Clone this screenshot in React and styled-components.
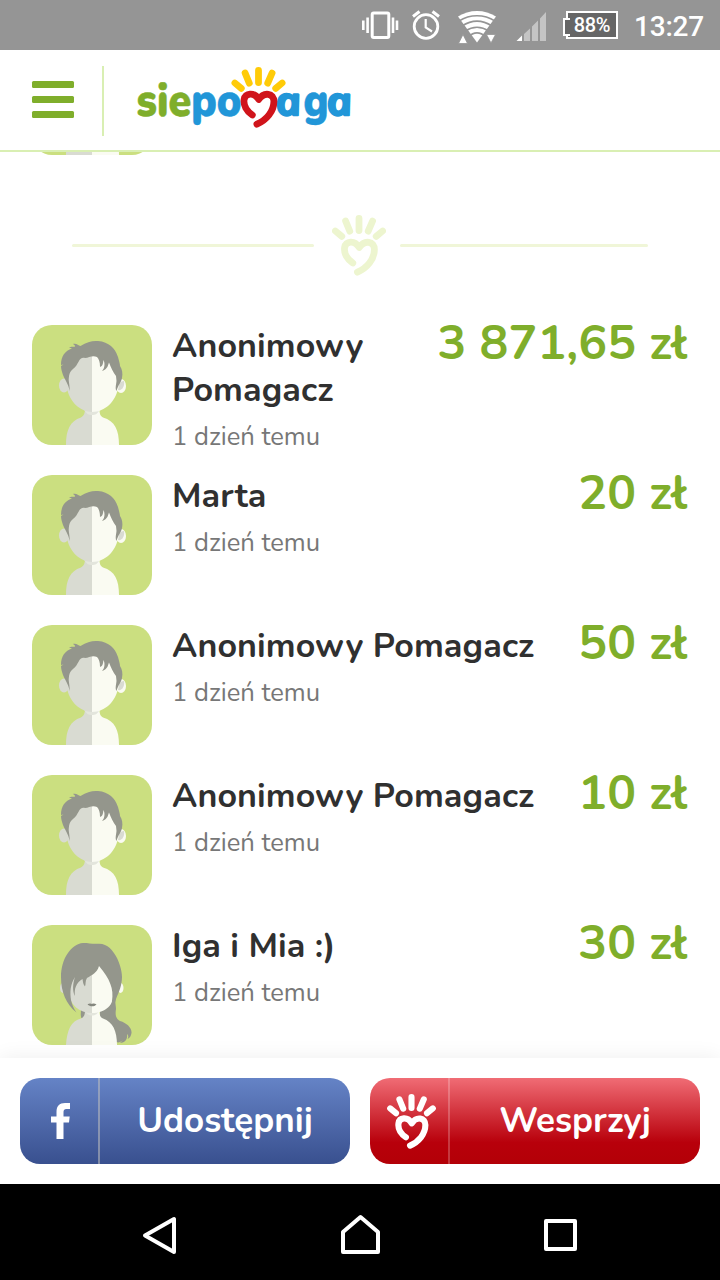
import React from 'react';
import styled, { createGlobalStyle } from 'styled-components';

const GlobalStyle = createGlobalStyle`
    * { box-sizing: border-box; }
    body { margin: 0; background: #fff; }
    svg { display: block; flex: none; }
`

const Screen = styled.div`
    display: flex;
    flex-direction: column;
    width: 720px;
    height: 1280px;
    overflow: hidden;
    background: #fff;
    font-family: Nunito, Lato, sans-serif;
`

const StatusBar = styled.div`
    display: flex;
    justify-content: flex-end;
    align-items: center;
    flex: none;
    height: 50px;
    padding-right: 16px;
    background: #959595;
`

const Clock = styled.span`
    width: 70px;
    margin-left: 16px;
    color: #fff;
    font: 500 28px/32px Roboto, sans-serif;
    letter-spacing: -0.2px;
    white-space: nowrap;
    padding-top: 3px;
`

const Battery = styled.div`
    position: relative;
    display: flex;
    align-items: center;
    justify-content: center;
    width: 52px;
    height: 28px;
    margin-left: 20px;
    border: 2px solid #fff;
    background: #666;
    color: #fff;
    font: 500 20px/24px Roboto, sans-serif;
    letter-spacing: -0.4px;

    &::before {
        content: '';
        position: absolute;
        left: -5px;
        top: 5px;
        width: 5px;
        height: 14px;
        border: 2px solid #fff;
        border-right: 0;
        background: #666;
    }
`

const Header = styled.header`
    display: flex;
    align-items: center;
    flex: none;
    height: 102px;
    padding-left: 32px;
    border-bottom: 2px solid #d9efb3;
    background: #fff;
`

const MenuButton = styled.div`
    display: flex;
    flex-direction: column;
    gap: 8px;
    width: 42px;
    margin-bottom: 1px;
`

const MenuBar = styled.span`
    height: 7px;
    border-radius: 1.5px;
    background: #7fae2b;
`

const HeaderLine = styled.div`
    width: 2px;
    height: 70px;
    margin: 2px 32px 0 28px;
    background: #d9efb3;
`

const Content = styled.main`
    flex: 1;
    min-height: 0;
    overflow: hidden;
    padding: 0 32px;
`

const Previous = styled.div`
    margin-top: -117px;
`

const Divider = styled.div`
    display: flex;
    align-items: center;
    height: 61px;
    margin: 60px 40px 49px;
`

const DividerLine = styled.span`
    flex: ${props => props.$grow} 0 0;
    height: 3px;
    border-radius: 2px;
    background: #f0f6d8;
`

const DividerIcon = styled.div`
    margin: 0 14px 0 18px;
`

const List = styled.div`
    display: flex;
    flex-direction: column;
    gap: 30px;
`

const Row = styled.div`
    display: flex;
    height: 120px;
`

const Avatar = styled.div`
    flex: none;
    width: 120px;
    height: 120px;
    overflow: hidden;
    border-radius: 20px;
    background: #cbdf80;
`

const Person = styled.div`
    flex: 1;
    min-width: 0;
    margin-top: -1px;
    padding-left: 20px;
`

const Name = styled.div`
    color: #303030;
    font-size: 34px;
    font-weight: 700;
    line-height: 44px;
    letter-spacing: 0.1px;
`

const Ago = styled.div`
    margin-top: 9px;
    color: #777;
    font-size: 25.6px;
    line-height: 32px;
`

const Amount = styled.div`
    margin: -1px 0.5px 0 0;
    color: #7fae2b;
    font-size: 48px;
    font-weight: 700;
    line-height: 38px;
    letter-spacing: 0.1px;
    white-space: nowrap;
`

const Footer = styled.footer`
    display: flex;
    flex: none;
    gap: 20px;
    height: 126px;
    padding: 20px;
    position: relative;
    background: #fff;
    box-shadow: 0 0 20px rgba(0, 0, 0, 0.07);
`

const Button = styled.div`
    display: flex;
    flex: 1;
    height: 86px;
    overflow: hidden;
    border-radius: 20px;
    background: ${props => props.$red
        ? 'linear-gradient(#f06c75, #b8000b 75%, #b30007)'
        : 'linear-gradient(#6583c6, #39508f)'};
    color: #fff;
`

const ButtonIcon = styled.div`
    display: flex;
    align-items: center;
    justify-content: center;
    width: 80px;
    padding-left: ${props => props.$red ? '5px' : '3px'};
    border-right: 2px solid ${props => props.$red ? 'rgba(255, 255, 255, .22)' : 'rgba(190, 190, 190, .55)'};
`

const ButtonLabel = styled.div`
    flex: 1;
    text-align: center;
    font-size: 35px;
    font-weight: 700;
    line-height: 85px;
`

const NavBar = styled.nav`
    display: flex;
    justify-content: space-between;
    align-items: center;
    flex: none;
    height: 96px;
    padding: 6px 140px 0;
    background: #000;
`

const HandShape = ({ rays, heart }) => (
    <g fill="none" strokeLinecap="round" strokeLinejoin="round">
        <path stroke={rays} strokeWidth="6.8" d="M27 3.5V15.5M13.6 6L17.8 16.2M40.6 6L36.2 16.2M3.4 16L9.8 21.3M50.6 16L44.2 21.3" />
        <path stroke={heart} strokeWidth="6.8" d="M20.8 48C15 44 11.8 38 12.6 32.5C13.5 26 22.5 24.5 27.3 32.5C32.5 24.5 42.4 26 42.4 34.5C42.3 44.5 35 53 25.4 57.2" />
    </g>
)

const Hand = ({ color, width = 54, height = 61 }) => (
    <svg width={width} height={height} viewBox="0 0 54 61">
        <HandShape rays={color} heart={color} />
    </svg>
)

const LogoText = styled.text`
    font-family: Nunito, Lato, sans-serif;
    font-size: 46px;
    font-weight: 900;
    fill: ${props => props.$color};
    stroke: ${props => props.$color};
    stroke-width: 0.4px;
`

// the slanted cut has the single-storey a, so it is leaned back upright
const LogoA = styled(LogoText)`
    font-family: 'Open Sans', sans-serif;
    font-size: 38px;
    font-style: italic;
    font-weight: 600;
    stroke-width: 2.6px;
    stroke-linejoin: round;
`

const Logo = () => (
    <svg width="218" height="66" viewBox="136 67 218 66">
        <LogoText $color="#2196d8" x="136.5" y="116" textLength="105" lengthAdjust="spacingAndGlyphs">
            <tspan fill="#7fae2b" stroke="#7fae2b">sie</tspan>po
        </LogoText>
        <LogoA $color="#2196d8" transform="translate(278 114.8) skewX(12)" textLength="25" lengthAdjust="spacingAndGlyphs">a</LogoA>
        <LogoText $color="#2196d8" x="303.5" y="116" textLength="25" lengthAdjust="spacingAndGlyphs">g</LogoText>
        <LogoA $color="#2196d8" transform="translate(329 114.8) skewX(12)" textLength="25" lengthAdjust="spacingAndGlyphs">a</LogoA>
        <g transform="translate(231.5 67)">
            <HandShape rays="#ffcb08" heart="#d0141b" />
        </g>
    </svg>
)

const Man = () => (
    <svg width="120" height="120" viewBox="0 0 120 120">
        <path fill="#d9dbd2" d="M34 120C34 105 38 96 49 92.5C52 91 53 88 53 84H60V120Z" />
        <path fill="#fafbf2" d="M60 84H67.5C67.5 88 68 91 71 92.5C83 96 87 105 87 120H60Z" />
        <ellipse cx="32" cy="60.5" rx="5" ry="7" fill="#d9dbd2" />
        <ellipse cx="89" cy="61" rx="5" ry="7" fill="#fafbf2" />
        <path fill="#d9dbd2" d="M92 56C88 56 87 59 86 65C90 66 93 61 92 56Z" />
        <path fill="#e3e5dc" d="M52 84H68C66 89 63 90 60 90C57 90 54 89 52 84Z" />
        <path fill="#d9dbd2" d="M60 28H40L35 48V63C37 76 48 87 60 87Z" />
        <path fill="#fafbf2" d="M60 28H80L86 48V63C84 76 73 87 60 87Z" />
        <path fill="#94968c" d="M37.5 66C37 60 34 57 31 50C30 47 29 44 29 41L31.5 39.5L29 40C29 31 33 26 40 23.5L37 22.5C39 21 42 22 43 21.5C43 20 42 19.5 41 19C45 18 46 21 48.5 21C55 17 60 15.5 66 16C77 17 83 23 86 32C87 36 88 39 88 41C90 44 91 48 90 53C89 58 86 60 84.5 66C83 63 84 61 84.5 56L84 51C81 47 79 43 77 37.5C76 40 76 44 70 46C73 43 73 38 71.5 35C71 38 71 41 68 42C68 37 67 34 65 32C60 30 57 33 53 33C50 32 48 34 47 36C45 39 44 42 41 44C37 47 37 51 36.7 55C37 59 38 62 37.5 66Z" />
    </svg>
)

const Woman = () => (
    <svg width="120" height="120" viewBox="0 0 120 120">
        <ellipse cx="31" cy="63" rx="3" ry="5" fill="#d9dbd2" />
        <ellipse cx="88.5" cy="63" rx="3" ry="5" fill="#fafbf2" />
        <path fill="#94968c" d="M49 84H53V91L50 94C48 91 49 88 49 84ZM68 84L82 70H85C82 76 84 79 84 84C83 90 84 94 88 96C95 98 100 103 99.5 108C99 111 98 113 95.5 114C97 111 96 110 95 109C96 115 92 118 88 118L91 115C88 118 85 118 83 116L68 92Z" />
        <path fill="#d9dbd2" d="M34 120C35 105 39 96 49 93.5C52 92 53 90 53 85H60V120Z" />
        <path fill="#fafbf2" d="M60 85H67.5C67.5 90 68 92 71 93.5C81 97 85 106 85 120H60Z" />
        <path fill="#e3e5dc" d="M52 84H68C66 89 63 90.5 60 90.5C57 90.5 54 89 52 84Z" />
        <path fill="#d9dbd2" d="M60 32L39 47L37 68C38 80 47 88 60 88Z" />
        <path fill="#fafbf2" d="M60 32L76 42L82 66C83 80 73 88 60 88Z" />
        <path fill="#94968c" d="M44.5 87.5C34 79 29 67 29 52C29 34 39 19 51 18C57 18 60 19 66 18.7C75 18 81 25 85 33C87 37 90 45 90 52C90 60 87 67 84 74C83 78 82 81 79 82L80 76C82 64 78 54 67 41C65 48 60 50 55 53C53 56 54 59 53 61.5C51 59 51 57 50.5 54C44 58 42 64 43 71C40 66 41 58 43 52C38 60 38 67 39 75C40 80 42 84 44.5 87.5Z" />
        <path fill="#85877e" d="M55.5 79.3C58 78 59 78.7 60 79C61 78.3 63 78.5 64.5 79.5C62 82 58 82 55.5 79.3Z" />
    </svg>
)

const donors = [
    { name: 'Anonimowy Pomagacz', amount: '3 871,65 zł' },
    { name: 'Marta', amount: '20 zł' },
    { name: 'Anonimowy Pomagacz', amount: '50 zł' },
    { name: 'Anonimowy Pomagacz', amount: '10 zł' },
    { name: 'Iga i Mia :)', amount: '30 zł', woman: true },
]

const Donor = ({ name, amount, woman }) => (
    <Row>
        <Avatar>{woman ? <Woman /> : <Man />}</Avatar>
        <Person>
            <Name>{name}</Name>
            <Ago>1 dzień temu</Ago>
        </Person>
        <Amount>{amount}</Amount>
    </Row>
)

const StatusIcons = () => (
    <svg width="184" height="50" viewBox="362 0 184 50" fill="none" stroke="#fff">
        <rect x="372.2" y="13" width="16.6" height="24.5" rx="1.5" strokeWidth="3" />
        <path strokeWidth="2.6" d="M363.3 20.5V30M367.6 17.5V33M393 17.5V33M397 20.5V30" />
        <circle cx="426" cy="26.5" r="11.8" strokeWidth="2.8" />
        <path strokeWidth="2.2" d="M425.7 19V27.5L432 31.5" />
        <path strokeWidth="3" d="M413 16.5L419.5 11.5M432.5 11.5L439 16.5" />
        <path fill="#fff" stroke="none" d="M458 16.5C469 9 485 9 496 16.5L477 42.5Z" />
        <path stroke="#959595" strokeWidth="1.5" d="M459 21C470 14 484 14 495 21M462 26C472 19.5 482 19.5 492 26M465 31C473 26 481 26 489 31M468 37C474 31.5 480 31.5 486 37" />
        <path fill="#fff" stroke="#959595" strokeWidth="0.8" d="M458.5 43.5L463 34.5L467.5 43.5ZM486.5 34.5H495.5L491 43Z" />
        <path fill="#c4c4c4" stroke="none" d="M524 34L530 28.5V41H524ZM532 26.5L538 20.5V41H532ZM540 18.5L546 12V41H540Z" />
        <path fill="#fff" stroke="none" d="M516.5 41L522 35.5V41Z" />
    </svg>
)

class App extends React.Component {
    render() {
        return (
            <Screen>
                <GlobalStyle />
                <StatusBar>
                    <StatusIcons />
                    <Battery>88%</Battery>
                    <Clock>13:27</Clock>
                </StatusBar>
                <Header>
                    <MenuButton>
                        <MenuBar />
                        <MenuBar />
                        <MenuBar />
                    </MenuButton>
                    <HeaderLine />
                    <Logo />
                </Header>
                <Content>
                    <Previous>
                        <Avatar><Man /></Avatar>
                    </Previous>
                    <Divider>
                        <DividerLine $grow={242} />
                        <DividerIcon><Hand color="#edf5cf" /></DividerIcon>
                        <DividerLine $grow={248} />
                    </Divider>
                    <List>
                        {donors.map((donor, i) => <Donor key={i} {...donor} />)}
                    </List>
                </Content>
                <Footer>
                    <Button>
                        <ButtonIcon>
                            <svg width="20" height="36" viewBox="0 0 20 36" fill="#fff">
                                <path d="M5.5 36V19.5H0V13.5H5.5V9C5.5 3 8.5 0 14 0H19V6H15.5C13 6 12.5 7.2 12.5 9.5V13.5H18.7L18 19.5H12.5V36Z" />
                            </svg>
                        </ButtonIcon>
                        <ButtonLabel>Udostępnij</ButtonLabel>
                    </Button>
                    <Button $red>
                        <ButtonIcon $red>
                            <Hand color="#fff" width={49} height={55} />
                        </ButtonIcon>
                        <ButtonLabel>Wesprzyj</ButtonLabel>
                    </Button>
                </Footer>
                <NavBar>
                    <svg width="40" height="44" viewBox="0 0 40 44" fill="none" stroke="#fff" strokeWidth="4" strokeLinejoin="round">
                        <path d="M5 22.5L34 6V39Z" />
                    </svg>
                    <svg width="44" height="44" viewBox="0 0 44 44" fill="none" stroke="#fff" strokeWidth="4" strokeLinejoin="round">
                        <path d="M5 19L22.5 4L40 19V39H5Z" />
                    </svg>
                    <svg width="40" height="44" viewBox="0 0 40 44" fill="none" stroke="#fff" strokeWidth="4" strokeLinejoin="round">
                        <rect x="6" y="8" width="29" height="28" />
                    </svg>
                </NavBar>
            </Screen>
        )
    }
}

export default App
